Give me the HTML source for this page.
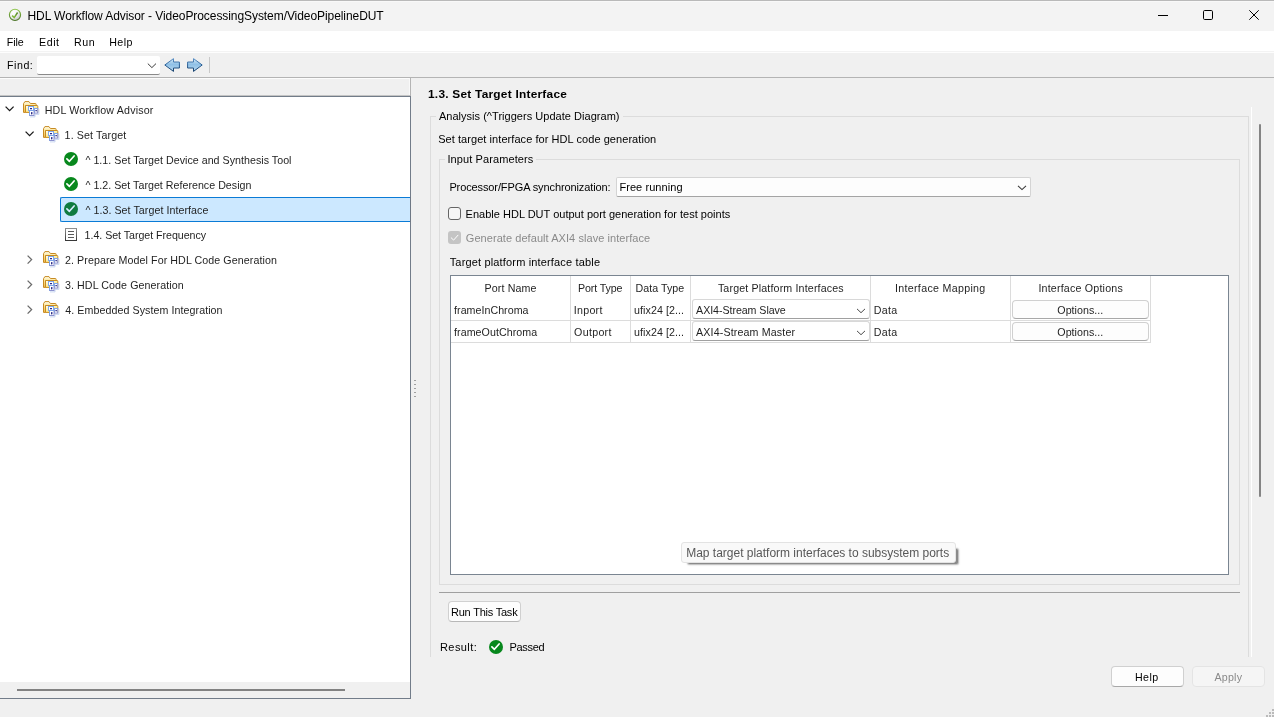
<!DOCTYPE html>
<html lang="en">
<head>
<meta charset="utf-8">
<title>HDL Workflow Advisor - VideoProcessingSystem/VideoPipelineDUT</title>
<style>
*{box-sizing:border-box;margin:0;padding:0}
html,body{width:1274px;height:717px;overflow:hidden;background:#f0f0f0}
body{position:relative;font-family:"Liberation Sans",sans-serif;font-size:12px;color:#1b1b1b}
.a{position:absolute}
.t{position:absolute;white-space:nowrap;line-height:16px;height:16px}
.s{font-size:10.67px;color:#1f1f1f}
.h{font-size:11px;color:#000}
.ln{position:absolute;background:#dcdcdc}
svg{position:absolute;overflow:visible}
</style>
</head>
<body>
<div class="a" style="left:0;top:0;width:1274px;height:717px;will-change:transform">
<!-- title bar -->
<div class="a" style="left:0;top:0;width:1274px;height:31px;background:#f3f3f3"></div>
<div class="a" style="left:0;top:0;width:1274px;height:1px;background:#b9b9b9"></div>
<div class="a" style="left:0;top:1px;width:1274px;height:1px;background:#f8f8f8"></div>
<span class="t" id="title" style="letter-spacing:-0.07px;left:27.5px;top:8px;color:#000;font-size:12px">HDL Workflow Advisor - VideoProcessingSystem/VideoPipelineDUT</span>
<svg width="14" height="14" style="left:8px;top:8px">
<defs><linearGradient id="gr1" x1="0" y1="0" x2="0" y2="1"><stop offset="0" stop-color="#8fc64d"/><stop offset="1" stop-color="#4d7628"/></linearGradient>
<radialGradient id="gr2" cx="0.35" cy="0.3" r="0.75"><stop offset="0" stop-color="#ffffff"/><stop offset="0.55" stop-color="#f2f2f4"/><stop offset="1" stop-color="#bdbdc2"/></radialGradient>
<linearGradient id="gr3" x1="0" y1="1" x2="1" y2="0"><stop offset="0" stop-color="#8cc540"/><stop offset="1" stop-color="#55862a"/></linearGradient></defs>
<circle cx="7" cy="6.85" r="5.6" fill="url(#gr2)" stroke="url(#gr1)" stroke-width="1.1"/>
<path d="M4.1 7.6 L6.2 9.6 L9.6 4.5" fill="none" stroke="url(#gr3)" stroke-width="1.5" stroke-linejoin="miter"/>
</svg>
<!-- window controls -->
<svg width="10" height="2" style="left:1158px;top:15px"><path d="M0 0.5 H10" stroke="#000" stroke-width="1"/></svg>
<svg width="10" height="10" style="left:1203px;top:10px"><rect x="0.5" y="0.5" width="9" height="9" rx="1.2" fill="none" stroke="#000" stroke-width="1"/></svg>
<svg width="10" height="10" style="left:1249px;top:10px"><path d="M0.3 0.3 L9.7 9.7 M9.7 0.3 L0.3 9.7" stroke="#000" stroke-width="1" fill="none"/></svg>
<!-- menu bar -->
<div class="a" style="left:0;top:31px;width:1274px;height:21px;background:#fff"></div>
<span class="t s" style="letter-spacing:-0.04px;left:6.7px;top:34px;color:#000">File</span>
<span class="t s" style="letter-spacing:0.51px;left:39.1px;top:34px;color:#000">Edit</span>
<span class="t s" style="letter-spacing:0.50px;left:74.1px;top:34px;color:#000">Run</span>
<span class="t s" style="letter-spacing:0.45px;left:109.2px;top:34px;color:#000">Help</span>
<!-- toolbar -->
<div class="a" style="left:0;top:51px;width:1274px;height:1px;background:#f3f3f3"></div>
<div class="a" style="left:0;top:52px;width:1274px;height:1px;background:#fdfdfd"></div>
<span class="t s" style="letter-spacing:0.50px;left:7.1px;top:57px;color:#000">Find:</span>
<div class="a" style="left:37px;top:56px;width:123px;height:19px;background:#fff;border-radius:2px;border-bottom:1px solid #8a8a8a"></div>
<svg width="10" height="6" style="left:147px;top:63px"><path d="M0.8 0.6 L4.9 4.6 L9 0.6" fill="none" stroke="#3a3a3a" stroke-width="1"/></svg>
<svg width="0" height="0" style="left:0;top:0"><defs>
<linearGradient id="ga" x1="0" y1="0" x2="0" y2="1"><stop offset="0" stop-color="#d9ecf9"/><stop offset="0.45" stop-color="#8fc0e6"/><stop offset="1" stop-color="#b9d9f0"/></linearGradient>
<linearGradient id="gas" x1="0" y1="0" x2="0" y2="1"><stop offset="0" stop-color="#5f93c8"/><stop offset="0.5" stop-color="#2a5f94"/><stop offset="1" stop-color="#163f6b"/></linearGradient>
</defs></svg>
<svg width="16" height="14" style="left:164px;top:58px"><path d="M0.8 7 L9.5 0.6 L9.5 4 L15.4 4 L15.4 10 L9.5 10 L9.5 13.4 Z" fill="url(#ga)" stroke="url(#gas)" stroke-width="1" stroke-linejoin="miter"/></svg>
<svg width="16" height="14" style="left:187px;top:58px"><g transform="translate(16,0) scale(-1,1)"><path d="M0.8 7 L9.5 0.6 L9.5 4 L15.4 4 L15.4 10 L9.5 10 L9.5 13.4 Z" fill="url(#ga)" stroke="url(#gas)" stroke-width="1" stroke-linejoin="miter"/></g></svg>
<div class="a" style="left:209px;top:57px;width:1px;height:16px;background:#c8c8c8"></div>
<div class="a" style="left:0;top:77px;width:1274px;height:1px;background:#b4b4b4"></div>
<div class="a" style="left:0;top:78px;width:410px;height:1px;background:#fcfcfc"></div>
<div class="a" style="left:409px;top:78px;width:1px;height:17px;background:#f9f9f9"></div>

<!-- left panel -->
<div class="a" style="left:0;top:95px;width:411px;height:1px;background:#c4c4c4"></div>
<div class="a" style="left:0;top:96px;width:411px;height:603px;background:#fff;border-top:1px solid #727c89;border-right:1px solid #727c89;border-bottom:1px solid #727c89"></div>
<div class="a" style="left:410px;top:78px;width:1px;height:18px;background:#b4b4b4"></div>
<div class="a" style="left:0;top:682px;width:410px;height:16px;background:#f0f0f0"></div>
<div class="a" style="left:17px;top:689px;width:328px;height:2px;background:#828282"></div>


<!-- icon defs -->
<svg width="0" height="0" style="left:0;top:0">
<defs>
<linearGradient id="gf" x1="0" y1="0" x2="0.6" y2="1"><stop offset="0" stop-color="#ffffff"/><stop offset="0.5" stop-color="#fdf0a8"/><stop offset="1" stop-color="#f8dc78"/></linearGradient>
<linearGradient id="gb" x1="0" y1="0" x2="0" y2="1"><stop offset="0" stop-color="#fffdf0"/><stop offset="0.35" stop-color="#fde79a"/><stop offset="1" stop-color="#f2b84a"/></linearGradient>
</defs>
</svg>

<!-- tree -->
<div class="a" style="left:60px;top:197px;width:351px;height:25px;background:#cce8ff;border:1px solid #0a7bd6;border-right:none;border-radius:2px 0 0 2px"></div>
<div class="a" style="left:410px;top:197px;width:1px;height:25px;background:#6e7885"></div>

<svg width="10" height="6" style="left:5px;top:106px"><path d="M0.6 0.6 L4.6 4.6 L8.6 0.6" fill="none" stroke="#1a1a1a" stroke-width="1.3"/></svg>
<svg width="16" height="16" style="left:23px;top:101px"><path d="M0.5 11.4 L0.5 2.7 L1.9 0.6 L6 0.6 L7.4 2.5 L12.5 2.5 Q13.1 2.5 13.1 3.2 L13.1 4.6 L2.6 4.6 L2.6 11.4 Z" fill="url(#gb)" stroke="#c78b22" stroke-width="1" stroke-linejoin="round"/>
<path d="M2.5 4.5 L14.1 4.5 Q14.8 4.5 14.8 5.3 L14.8 11.4 L2.5 11.4 Z" fill="url(#gf)" stroke="#c78b22" stroke-width="1" stroke-linejoin="round"/>
<path d="M7 15.9 L12 15.9 L12 13.4 L15.9 13.4 L15.9 8" fill="none" stroke="#c3d3ee" stroke-width="0.9"/>
<rect x="11.5" y="7.5" width="3.2" height="4.6" fill="#fff" stroke="#8d93cf" stroke-width="1"/>
<path d="M11.5 12.1 V7.5 H14.7" fill="none" stroke="#7ea6ea" stroke-width="1"/>
<rect x="5.5" y="5.5" width="5" height="4" fill="#fff" stroke="#7ea6ea" stroke-width="1"/>
<rect x="6.5" y="9.5" width="4.5" height="5" fill="#fff" stroke="#8d93cf" stroke-width="1"/>
<path d="M6.5 14.5 V9.5 H11" fill="none" stroke="#7ea6ea" stroke-width="1"/>
<rect x="7" y="7" width="2" height="1.2" rx="0.5" fill="#10107a"/>
<rect x="12.4" y="9" width="1.5" height="1.2" rx="0.5" fill="#10107a"/>
<rect x="8.1" y="11" width="1.3" height="2.4" rx="0.6" fill="#10107a"/></svg>
<span class="t s" style="letter-spacing:0.17px;left:44.7px;top:102px">HDL Workflow Advisor</span>

<svg width="10" height="6" style="left:25px;top:131px"><path d="M0.6 0.6 L4.6 4.6 L8.6 0.6" fill="none" stroke="#1a1a1a" stroke-width="1.3"/></svg>
<svg width="16" height="16" style="left:43px;top:126px"><path d="M0.5 11.4 L0.5 2.7 L1.9 0.6 L6 0.6 L7.4 2.5 L12.5 2.5 Q13.1 2.5 13.1 3.2 L13.1 4.6 L2.6 4.6 L2.6 11.4 Z" fill="url(#gb)" stroke="#c78b22" stroke-width="1" stroke-linejoin="round"/>
<path d="M2.5 4.5 L14.1 4.5 Q14.8 4.5 14.8 5.3 L14.8 11.4 L2.5 11.4 Z" fill="url(#gf)" stroke="#c78b22" stroke-width="1" stroke-linejoin="round"/>
<path d="M7 15.9 L12 15.9 L12 13.4 L15.9 13.4 L15.9 8" fill="none" stroke="#c3d3ee" stroke-width="0.9"/>
<rect x="11.5" y="7.5" width="3.2" height="4.6" fill="#fff" stroke="#8d93cf" stroke-width="1"/>
<path d="M11.5 12.1 V7.5 H14.7" fill="none" stroke="#7ea6ea" stroke-width="1"/>
<rect x="5.5" y="5.5" width="5" height="4" fill="#fff" stroke="#7ea6ea" stroke-width="1"/>
<rect x="6.5" y="9.5" width="4.5" height="5" fill="#fff" stroke="#8d93cf" stroke-width="1"/>
<path d="M6.5 14.5 V9.5 H11" fill="none" stroke="#7ea6ea" stroke-width="1"/>
<rect x="7" y="7" width="2" height="1.2" rx="0.5" fill="#10107a"/>
<rect x="12.4" y="9" width="1.5" height="1.2" rx="0.5" fill="#10107a"/>
<rect x="8.1" y="11" width="1.3" height="2.4" rx="0.6" fill="#10107a"/></svg>
<span class="t s" style="letter-spacing:0.12px;left:64.6px;top:127px">1. Set Target</span>

<svg width="14" height="14" style="left:64px;top:152px"><circle cx="7" cy="7" r="7" fill="#08881d"/>
<path d="M2.9 6.8 L5.4 9.3 L10.1 4" fill="none" stroke="#fff" stroke-width="1.7" stroke-linejoin="round" stroke-linecap="round"/></svg>
<span class="t s" style="letter-spacing:0.03px;left:85.5px;top:152px"><span style="letter-spacing:2.9px">^</span>1.1. Set Target Device and Synthesis Tool</span>
<svg width="14" height="14" style="left:64px;top:177px"><circle cx="7" cy="7" r="7" fill="#08881d"/>
<path d="M2.9 6.8 L5.4 9.3 L10.1 4" fill="none" stroke="#fff" stroke-width="1.7" stroke-linejoin="round" stroke-linecap="round"/></svg>
<span class="t s" style="letter-spacing:0.02px;left:85.5px;top:177px"><span style="letter-spacing:2.9px">^</span>1.2. Set Target Reference Design</span>
<svg width="14" height="14" style="left:64px;top:202px"><circle cx="7" cy="7" r="7" fill="#0f7b40"/>
<path d="M2.9 6.8 L5.4 9.3 L10.1 4" fill="none" stroke="#d6ecff" stroke-width="1.7" stroke-linejoin="round" stroke-linecap="round"/></svg>
<span class="t s" style="letter-spacing:0.06px;left:85.5px;top:202px"><span style="letter-spacing:2.9px">^</span>1.3. Set Target Interface</span>

<svg width="13" height="14" style="left:65px;top:228px"><defs><linearGradient id="gd" x1="0" y1="0" x2="0" y2="1"><stop offset="0" stop-color="#8e8e8e"/><stop offset="1" stop-color="#383838"/></linearGradient></defs><rect x="0.5" y="0.5" width="11" height="12" fill="#fdfdfd" stroke="url(#gd)" stroke-width="1"/><path d="M3 3.5H9M3 6.5H9M3 9.5H9" stroke="#5a5a5a" stroke-width="1"/></svg>
<span class="t s" style="letter-spacing:-0.04px;left:84.6px;top:227px">1.4. Set Target Frequency</span>

<svg width="6" height="10" style="left:27px;top:255px"><path d="M0.6 0.6 L4.6 4.6 L0.6 8.6" fill="none" stroke="#6a6a6a" stroke-width="1.3"/></svg>
<svg width="16" height="16" style="left:43px;top:251px"><path d="M0.5 11.4 L0.5 2.7 L1.9 0.6 L6 0.6 L7.4 2.5 L12.5 2.5 Q13.1 2.5 13.1 3.2 L13.1 4.6 L2.6 4.6 L2.6 11.4 Z" fill="url(#gb)" stroke="#c78b22" stroke-width="1" stroke-linejoin="round"/>
<path d="M2.5 4.5 L14.1 4.5 Q14.8 4.5 14.8 5.3 L14.8 11.4 L2.5 11.4 Z" fill="url(#gf)" stroke="#c78b22" stroke-width="1" stroke-linejoin="round"/>
<path d="M7 15.9 L12 15.9 L12 13.4 L15.9 13.4 L15.9 8" fill="none" stroke="#c3d3ee" stroke-width="0.9"/>
<rect x="11.5" y="7.5" width="3.2" height="4.6" fill="#fff" stroke="#8d93cf" stroke-width="1"/>
<path d="M11.5 12.1 V7.5 H14.7" fill="none" stroke="#7ea6ea" stroke-width="1"/>
<rect x="5.5" y="5.5" width="5" height="4" fill="#fff" stroke="#7ea6ea" stroke-width="1"/>
<rect x="6.5" y="9.5" width="4.5" height="5" fill="#fff" stroke="#8d93cf" stroke-width="1"/>
<path d="M6.5 14.5 V9.5 H11" fill="none" stroke="#7ea6ea" stroke-width="1"/>
<rect x="7" y="7" width="2" height="1.2" rx="0.5" fill="#10107a"/>
<rect x="12.4" y="9" width="1.5" height="1.2" rx="0.5" fill="#10107a"/>
<rect x="8.1" y="11" width="1.3" height="2.4" rx="0.6" fill="#10107a"/></svg>
<span class="t s" style="letter-spacing:0.08px;left:65.0px;top:252px">2. Prepare Model For HDL Code Generation</span>

<svg width="6" height="10" style="left:27px;top:280px"><path d="M0.6 0.6 L4.6 4.6 L0.6 8.6" fill="none" stroke="#6a6a6a" stroke-width="1.3"/></svg>
<svg width="16" height="16" style="left:43px;top:276px"><path d="M0.5 11.4 L0.5 2.7 L1.9 0.6 L6 0.6 L7.4 2.5 L12.5 2.5 Q13.1 2.5 13.1 3.2 L13.1 4.6 L2.6 4.6 L2.6 11.4 Z" fill="url(#gb)" stroke="#c78b22" stroke-width="1" stroke-linejoin="round"/>
<path d="M2.5 4.5 L14.1 4.5 Q14.8 4.5 14.8 5.3 L14.8 11.4 L2.5 11.4 Z" fill="url(#gf)" stroke="#c78b22" stroke-width="1" stroke-linejoin="round"/>
<path d="M7 15.9 L12 15.9 L12 13.4 L15.9 13.4 L15.9 8" fill="none" stroke="#c3d3ee" stroke-width="0.9"/>
<rect x="11.5" y="7.5" width="3.2" height="4.6" fill="#fff" stroke="#8d93cf" stroke-width="1"/>
<path d="M11.5 12.1 V7.5 H14.7" fill="none" stroke="#7ea6ea" stroke-width="1"/>
<rect x="5.5" y="5.5" width="5" height="4" fill="#fff" stroke="#7ea6ea" stroke-width="1"/>
<rect x="6.5" y="9.5" width="4.5" height="5" fill="#fff" stroke="#8d93cf" stroke-width="1"/>
<path d="M6.5 14.5 V9.5 H11" fill="none" stroke="#7ea6ea" stroke-width="1"/>
<rect x="7" y="7" width="2" height="1.2" rx="0.5" fill="#10107a"/>
<rect x="12.4" y="9" width="1.5" height="1.2" rx="0.5" fill="#10107a"/>
<rect x="8.1" y="11" width="1.3" height="2.4" rx="0.6" fill="#10107a"/></svg>
<span class="t s" style="letter-spacing:0.08px;left:65.0px;top:277px">3. HDL Code Generation</span>

<svg width="6" height="10" style="left:27px;top:305px"><path d="M0.6 0.6 L4.6 4.6 L0.6 8.6" fill="none" stroke="#6a6a6a" stroke-width="1.3"/></svg>
<svg width="16" height="16" style="left:43px;top:301px"><path d="M0.5 11.4 L0.5 2.7 L1.9 0.6 L6 0.6 L7.4 2.5 L12.5 2.5 Q13.1 2.5 13.1 3.2 L13.1 4.6 L2.6 4.6 L2.6 11.4 Z" fill="url(#gb)" stroke="#c78b22" stroke-width="1" stroke-linejoin="round"/>
<path d="M2.5 4.5 L14.1 4.5 Q14.8 4.5 14.8 5.3 L14.8 11.4 L2.5 11.4 Z" fill="url(#gf)" stroke="#c78b22" stroke-width="1" stroke-linejoin="round"/>
<path d="M7 15.9 L12 15.9 L12 13.4 L15.9 13.4 L15.9 8" fill="none" stroke="#c3d3ee" stroke-width="0.9"/>
<rect x="11.5" y="7.5" width="3.2" height="4.6" fill="#fff" stroke="#8d93cf" stroke-width="1"/>
<path d="M11.5 12.1 V7.5 H14.7" fill="none" stroke="#7ea6ea" stroke-width="1"/>
<rect x="5.5" y="5.5" width="5" height="4" fill="#fff" stroke="#7ea6ea" stroke-width="1"/>
<rect x="6.5" y="9.5" width="4.5" height="5" fill="#fff" stroke="#8d93cf" stroke-width="1"/>
<path d="M6.5 14.5 V9.5 H11" fill="none" stroke="#7ea6ea" stroke-width="1"/>
<rect x="7" y="7" width="2" height="1.2" rx="0.5" fill="#10107a"/>
<rect x="12.4" y="9" width="1.5" height="1.2" rx="0.5" fill="#10107a"/>
<rect x="8.1" y="11" width="1.3" height="2.4" rx="0.6" fill="#10107a"/></svg>
<span class="t s" style="letter-spacing:0.07px;left:65.3px;top:302px">4. Embedded System Integration</span>


<!-- splitter grip -->
<div class="a" style="left:414px;top:380px;width:2px;height:1px;background:#a0a0a0;box-shadow:0 4px #a0a0a0,0 8px #a0a0a0,0 12px #a0a0a0,0 16px #a0a0a0"></div>

<!-- right panel -->
<span class="t h" style="letter-spacing:0.22px;left:427.7px;top:86px;font-weight:bold;transform:scaleX(1.08);transform-origin:0 0">1.3. Set Target Interface</span>

<!-- analysis group -->
<div class="a" style="left:430px;top:116px;width:819px;height:541px;border:1px solid #dcdcdc;border-bottom:none"></div>
<div class="a" style="left:436px;top:112px;width:187px;height:9px;background:#f0f0f0"></div>
<span class="t h" style="letter-spacing:0.03px;left:438.9px;top:108px">Analysis (^Triggers Update Diagram)</span>
<span class="t h" style="letter-spacing:0.06px;left:438.2px;top:131px">Set target interface for HDL code generation</span>

<!-- input params group -->
<div class="a" style="left:439px;top:159px;width:801px;height:426px;border:1px solid #dcdcdc"></div>
<div class="a" style="left:445px;top:155px;width:91px;height:9px;background:#f0f0f0"></div>
<span class="t h" style="letter-spacing:0.10px;left:447.4px;top:151px">Input Parameters</span>

<span class="t h" style="letter-spacing:-0.11px;left:449.4px;top:178.5px">Processor/FPGA synchronization:</span>
<div class="a" style="left:616px;top:177px;width:415px;height:20px;background:#fdfdfd;border:1px solid #d4d4d4;border-bottom-color:#a4a4a4;border-radius:2px"></div>
<span class="t h" style="letter-spacing:0.07px;left:619.4px;top:178.5px">Free running</span>
<svg width="10" height="6" style="left:1017px;top:185px"><path d="M1 0.9 L5 4.6 L9 0.9" fill="none" stroke="#3a3a3a" stroke-width="1.1"/></svg>

<div class="a" style="left:448px;top:207px;width:13px;height:13px;background:#f6f6f6;border:1px solid #656565;border-radius:3px"></div>
<span class="t h" style="letter-spacing:0.01px;left:465.6px;top:206px">Enable HDL DUT output port generation for test points</span>

<div class="a" style="left:448px;top:231px;width:13px;height:13px;background:#c4c4c4;border-radius:3px"></div>
<svg width="13" height="13" style="left:448px;top:231px"><path d="M3.2 6.8 L5.6 9.1 L10 4.2" fill="none" stroke="#fff" stroke-width="1" stroke-linecap="round" stroke-linejoin="round"/></svg>
<span class="t h" style="letter-spacing:0.06px;left:465.8px;top:229.5px;color:#8a8a8a">Generate default AXI4 slave interface</span>

<span class="t h" style="letter-spacing:0.16px;left:449.7px;top:254px">Target platform interface table</span>

<!-- table -->
<div class="a" style="left:450px;top:275px;width:779px;height:300px;background:#fff;border:1px solid #7a8591"></div>
<div class="ln" style="left:570px;top:276px;width:1px;height:67px"></div>
<div class="ln" style="left:630px;top:276px;width:1px;height:67px"></div>
<div class="ln" style="left:690px;top:276px;width:1px;height:67px"></div>
<div class="ln" style="left:870px;top:276px;width:1px;height:67px"></div>
<div class="ln" style="left:1010px;top:276px;width:1px;height:67px"></div>
<div class="ln" style="left:1150px;top:276px;width:1px;height:67px"></div>
<div class="ln" style="left:451px;top:320px;width:700px;height:1px"></div>
<div class="ln" style="left:451px;top:342px;width:700px;height:1px"></div>

<span class="t s" style="letter-spacing:0.13px;left:484.5px;top:280px">Port Name</span>
<span class="t s" style="letter-spacing:-0.12px;left:578.0px;top:280px">Port Type</span>
<span class="t s" style="letter-spacing:0.03px;left:635.6px;top:280px">Data Type</span>
<span class="t s" style="letter-spacing:0.15px;left:717.9px;top:280px">Target Platform Interfaces</span>
<span class="t s" style="letter-spacing:0.31px;left:895.0px;top:280px">Interface Mapping</span>
<span class="t s" style="letter-spacing:0.20px;left:1038.4px;top:280px">Interface Options</span>

<span class="t s" style="letter-spacing:0.03px;left:454.1px;top:302px">frameInChroma</span>
<span class="t s" style="letter-spacing:0.27px;left:573.8px;top:302px">Inport</span>
<span class="t s" style="letter-spacing:0.06px;left:634.1px;top:302px">ufix24 [2...</span>
<div class="a" style="left:692px;top:299px;width:178px;height:20px;background:#fff;border:1px solid #d8d8d8;border-bottom-color:#a0a0a0;border-radius:3px"></div>
<span class="t s" style="letter-spacing:-0.06px;left:696.1px;top:302px">AXI4-Stream Slave</span>
<svg width="10" height="6" style="left:856px;top:307.5px"><path d="M1 0.9 L5 4.7 L9 0.9" fill="none" stroke="#4a4a4a" stroke-width="1"/></svg>
<span class="t s" style="letter-spacing:0.31px;left:873.8px;top:302px">Data</span>
<div class="a" style="left:1012px;top:300px;width:137px;height:19px;background:#fdfdfd;border:1px solid #d0d0d0;border-bottom-color:#a8a8a8;border-radius:4px"></div>
<span class="t s" style="letter-spacing:0.04px;left:1057.3px;top:302px">Options...</span>

<span class="t s" style="letter-spacing:0.05px;left:454.1px;top:324px">frameOutChroma</span>
<span class="t s" style="letter-spacing:0.30px;left:574.1px;top:324px">Outport</span>
<span class="t s" style="letter-spacing:0.06px;left:634.1px;top:324px">ufix24 [2...</span>
<div class="a" style="left:692px;top:321px;width:178px;height:20px;background:#fff;border:1px solid #d8d8d8;border-bottom-color:#a0a0a0;border-radius:3px"></div>
<span class="t s" style="letter-spacing:0.14px;left:696.1px;top:324px">AXI4-Stream Master</span>
<svg width="10" height="6" style="left:856px;top:329.5px"><path d="M1 0.9 L5 4.7 L9 0.9" fill="none" stroke="#4a4a4a" stroke-width="1"/></svg>
<span class="t s" style="letter-spacing:0.31px;left:873.8px;top:324px">Data</span>
<div class="a" style="left:1012px;top:322px;width:137px;height:19px;background:#fdfdfd;border:1px solid #d0d0d0;border-bottom-color:#a8a8a8;border-radius:4px"></div>
<span class="t s" style="letter-spacing:0.04px;left:1057.3px;top:324px">Options...</span>

<!-- tooltip -->
<div class="a" style="left:688px;top:549px;width:270px;height:15px;background:#8a8a8a;border-radius:2px;box-shadow:0 0 1.5px 0.5px rgba(110,110,110,.5)"></div>
<div class="a" style="left:681px;top:542px;width:275px;height:21px;background:#f9f9f9;border:1px solid #e3e3e3;border-radius:3px"></div>
<span class="t" style="letter-spacing:-0.01px;left:686.2px;top:544.5px;color:#575757;font-size:12px">Map target platform interfaces to subsystem ports</span>

<!-- separator -->
<div class="a" style="left:439px;top:592px;width:801px;height:1px;background:#a0a0a0"></div>

<!-- run this task -->
<div class="a" style="left:448px;top:601px;width:73px;height:21px;background:#fdfdfd;border:1px solid #d0d0d0;border-bottom-color:#b8b8b8;border-radius:4px"></div>
<span class="t h" style="letter-spacing:-0.22px;left:451.0px;top:604px">Run This Task</span>

<span class="t h" style="letter-spacing:0.41px;left:440.0px;top:639px">Result:</span>
<svg width="14" height="14" style="left:489px;top:640px"><circle cx="7" cy="7" r="7" fill="#08881d"/>
<path d="M2.9 6.8 L5.4 9.3 L10.1 4" fill="none" stroke="#fff" stroke-width="1.7" stroke-linejoin="round" stroke-linecap="round"/></svg>
<span class="t h" style="letter-spacing:-0.32px;left:509.5px;top:639px">Passed</span>

<!-- right scrollbar -->
<div class="a" style="left:1251px;top:107px;width:1px;height:550px;background:#fff"></div>
<div class="a" style="left:1259px;top:124px;width:2px;height:373px;background:#848484;border-radius:1px"></div>

<!-- bottom buttons -->
<div class="a" style="left:1111px;top:666px;width:73px;height:21px;background:#fdfdfd;border:1px solid #d0d0d0;border-bottom-color:#a8a8a8;border-radius:4px"></div>
<span class="t s" style="letter-spacing:0.4px;left:1135px;top:669px;color:#000">Help</span>
<div class="a" style="left:1192px;top:666px;width:73px;height:21px;background:#f5f5f5;border:1px solid #e4e4e4;border-radius:4px"></div>
<span class="t s" style="letter-spacing:0.23px;left:1214.4px;top:669px;color:#8a8a8a">Apply</span>

<!-- resize grip -->
<svg width="9" height="9" style="left:1266px;top:709px"><g fill="#bababa"><rect x="6" y="0" width="2" height="2"/><rect x="3" y="3" width="2" height="2"/><rect x="6" y="3" width="2" height="2"/><rect x="0" y="6" width="2" height="2"/><rect x="3" y="6" width="2" height="2"/><rect x="6" y="6" width="2" height="2"/></g></svg>

</div>
</body>
</html>
